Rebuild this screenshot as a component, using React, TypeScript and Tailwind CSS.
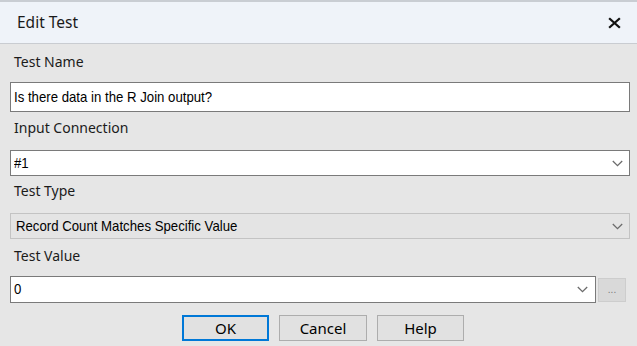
import React from "react";

const Chevron = () => (
  <svg width="11" height="7" viewBox="0 0 11 7" className="shrink-0">
    <path d="M0.8 1 L5.5 5.6 L10.2 1" fill="none" stroke="#6b6b6b" strokeWidth="1.3" />
  </svg>
);

const labelCls =
  "h-[20px] leading-[20px] text-[14px] text-[#1b1b1b] pl-[4px] font-['Noto_Sans',sans-serif]";
const valueCls =
  "text-[15px] text-black font-['Liberation_Sans',Arial,sans-serif] origin-left scale-x-[0.88] whitespace-nowrap";

export default function App() {
  return (
    <div className="w-[637px] h-[346px] bg-[#e6e6e6] overflow-hidden flex flex-col">
      <div className="h-[44px] shrink-0 bg-[#eff3f9] border-t-2 border-t-[#c9cdd3] border-b border-b-[#c9ccd1] flex items-center justify-between pl-[17px] pr-[16px]">
        <span className="text-[15.5px] text-[#1a1a1a] font-['Noto_Sans',sans-serif]">Edit Test</span>
        <svg width="13" height="12" viewBox="0 0 13 12">
          <path d="M2 2 L11 10 M11 2 L2 10" stroke="#111" strokeWidth="2.3" strokeLinecap="square" />
        </svg>
      </div>
      <div className="flex flex-col px-[10px]">
        <div className={`${labelCls} mt-[8px]`}>Test Name</div>
        <div className="mt-[10px] h-[30px] w-[620px] bg-white border border-[#7a7a7a] flex items-center pl-[3px]">
          <span className={valueCls}>Is there data in the R Join output?</span>
        </div>
        <div className={`${labelCls} mt-[6px]`}>Input Connection</div>
        <div className="mt-[12px] h-[26px] w-[620px] bg-white border border-[#7a7a7a] flex items-center justify-between pl-[3px] pr-[6px]">
          <span className={valueCls}>#1</span>
          <Chevron />
        </div>
        <div className={`${labelCls} mt-[5px]`}>Test Type</div>
        <div className="mt-[12px] h-[26px] w-[620px] bg-[#e4e4e4] border border-[#c3c3c3] flex items-center justify-between pl-[5px] pr-[6px]">
          <span className={valueCls}>Record Count Matches Specific Value</span>
          <Chevron />
        </div>
        <div className={`${labelCls} mt-[7px]`}>Test Value</div>
        <div className="mt-[10px] flex items-center gap-[2px]">
          <div className="h-[27px] w-[586px] bg-white border border-[#7a7a7a] flex items-center justify-between pl-[3px] pr-[7px]">
            <span className={valueCls}>0</span>
            <Chevron />
          </div>
          <div className="h-[24px] w-[28px] bg-[#d9d9d9] border border-[#cdcdcd] flex items-end justify-center pb-[6px]">
            <span className="text-[10px] leading-none text-[#7a7a7a] font-['Liberation_Sans',sans-serif] tracking-[0px]">...</span>
          </div>
        </div>
        <div className="mt-[12px] flex pl-[172px] gap-[10px]">
          <div className="h-[26px] w-[87px] bg-[#e1e1e1] border-2 border-[#0078d7] flex items-center justify-center text-[15px] text-black font-['Noto_Sans',sans-serif]">OK</div>
          <div className="h-[26px] w-[88px] bg-[#e1e1e1] border border-[#adadad] flex items-center justify-center text-[15px] text-black font-['Noto_Sans',sans-serif]">Cancel</div>
          <div className="h-[26px] w-[87px] bg-[#e1e1e1] border border-[#adadad] flex items-center justify-center text-[15px] text-black font-['Noto_Sans',sans-serif]">Help</div>
        </div>
      </div>
    </div>
  );
}
